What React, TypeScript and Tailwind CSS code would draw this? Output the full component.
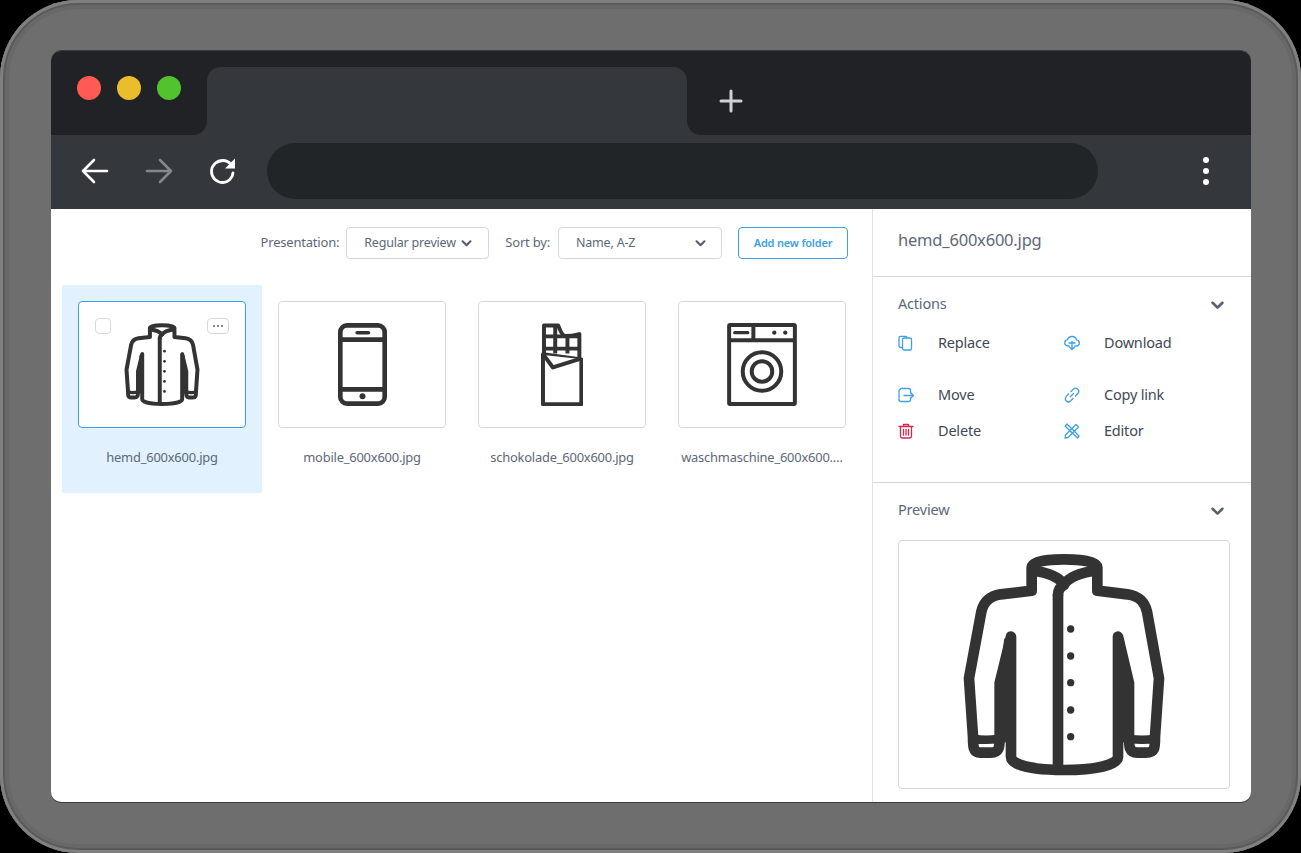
import React from "react";

const font = { fontFamily: '"Noto Sans", sans-serif' };

function Jacket({ className }: { className: string }) {
  return (
    <svg viewBox="0 0 690 747" className={className} fill="none" stroke="#333" strokeWidth="32" strokeLinejoin="round" strokeLinecap="round">
      <path d="M248 152V82C248 66 290 58 345 58C400 58 445 66 445 82V152L535 163C575 169 588 190 594 215L630 415L618 590C618 625 618 638 590 638H565C540 638 540 620 540 590V430L507 290V650C507 675 440 690 345 690C250 690 186 675 186 650V290L152 430V590C152 625 150 638 125 638H95C72 638 72 620 72 590L60 415L97 215C104 185 120 169 155 163L248 152Z" />
      <path d="M256 92C300 98 330 113 345 132C360 113 395 98 438 92" />
      <path d="M327 165V685" />
      <path d="M345 135C335 140 327 150 327 165" />
      <path d="M160 428L172 300V600H160Z" fill="#333" strokeWidth="14" />
      <path d="M530 428L518 300V600H530Z" fill="#333" strokeWidth="14" />
      <path d="M75 596C95 600 125 600 150 596M540 596C565 600 595 600 618 596" strokeWidth="26" />
      <g fill="#333" stroke="none">
        <circle cx="365" cy="267" r="11" />
        <circle cx="365" cy="348" r="11" />
        <circle cx="365" cy="428" r="11" />
        <circle cx="365" cy="510" r="11" />
        <circle cx="365" cy="590" r="11" />
      </g>
    </svg>
  );
}

function Phone() {
  return (
    <svg viewBox="0 0 148 250" className="h-[83px] w-[49px]" fill="none" stroke="#333" strokeWidth="14" strokeLinecap="round">
      <rect x="7" y="7" width="134" height="236" rx="20" />
      <path d="M7 50H141M7 200H141" />
      <path d="M58 29H92" strokeWidth="11" />
      <circle cx="74" cy="221" r="9" fill="#333" stroke="none" />
    </svg>
  );
}

function Chocolate() {
  return (
    <svg viewBox="0 0 127 250" className="h-[83px] w-[42px]" fill="none" stroke="#333" strokeWidth="12" strokeLinejoin="round">
      <path d="M9 92V7H52C58 20 62 38 74 39C88 39 100 37 116 33V105" />
      <path d="M9 40H116M9 77H116M43 7V92M80 40V92" />
      <path d="M6 94L122 110V245H6Z" fill="#fff" />
      <path d="M8 96L36 134L118 108" fill="#fff" />
    </svg>
  );
}

function Washer() {
  return (
    <svg viewBox="0 0 210 250" className="h-[83px] w-[70px]" fill="none" stroke="#333" strokeWidth="12" strokeLinejoin="round">
      <rect x="6" y="6" width="198" height="238" rx="3" />
      <path d="M5 52H205M79 6V52" />
      <path d="M23 29H62" strokeWidth="10" strokeLinecap="round" />
      <circle cx="142" cy="29" r="6.5" fill="#333" stroke="none" />
      <circle cx="175" cy="29" r="6.5" fill="#333" stroke="none" />
      <circle cx="105" cy="146" r="58" strokeWidth="12" />
      <circle cx="105" cy="146" r="31" strokeWidth="12" />
    </svg>
  );
}

function Chevron({ className }: { className: string }) {
  return (
    <svg viewBox="0 0 12 8" className={className} fill="none" stroke="#56606f" strokeWidth="2.4" strokeLinecap="round" strokeLinejoin="round">
      <path d="M1.5 1.5L6 6L10.5 1.5" />
    </svg>
  );
}

function ActionIcon({ d, red }: { d: React.ReactNode; red?: boolean }) {
  return (
    <svg viewBox="0 0 16 16" className="h-4 w-4" fill="none" stroke={red ? "#d4284f" : "#3d9fe6"} strokeWidth="1.3" strokeLinecap="round" strokeLinejoin="round">
      {d}
    </svg>
  );
}

const actions: { label: string; icon: React.ReactNode; red?: boolean }[] = [
  {
    label: "Replace",
    icon: (
      <>
        <path d="M4 12.500H2.600C1.700 12.500 1 11.800 1 11V3C1 2 1.700 1.400 2.600 1.400H7.500C8.400 1.400 9 2 9 3" />
        <rect x="4.500" y="3" width="9" height="12" rx="1.600" />
      </>
    ),
  },
  {
    label: "Download",
    icon: (
      <>
        <path d="M5 11H4C2 11 .7 9.500 .7 7.800C.7 6.200 1.900 4.900 3.400 4.700C4 2.900 5.800 1.500 8 1.500C10.300 1.500 12.100 3.100 12.500 4.900C14.100 5.100 15.300 6.300 15.300 7.900C15.300 9.600 14 11 12 11H11" />
        <path d="M8 6.500V14.500M5.500 12L8 14.500L10.500 12M5 8H11" />
      </>
    ),
  },
  {
    label: "Move",
    icon: (
      <>
        <path d="M12.500 6V3.500C12.500 2.300 11.700 1.500 10.500 1.500H3L1 3.500V12.500C1 13.700 1.800 14.500 3 14.500H10.500C11.700 14.500 12.500 13.700 12.500 12.500V11" />
        <path d="M6 8.500H15.500M13 6L15.500 8.500L13 11" />
      </>
    ),
  },
  {
    label: "Copy link",
    icon: (
      <>
        <path d="M6.500 9.500L9.500 6.500" />
        <path d="M7 4.500L9.500 2C10.800 .9 12.600 .9 13.800 2.200C15 3.400 15 5.200 13.800 6.500L11.500 9" />
        <path d="M9 11.500L6.500 14C5.200 15.200 3.400 15.200 2.200 14C1 12.800 1 10.900 2.200 9.700L4.500 7" />
      </>
    ),
  },
  {
    label: "Delete",
    red: true,
    icon: (
      <>
        <path d="M1 3.500H15M5.500 3.500V1.500H10.500V3.500" />
        <path d="M2.500 3.500V13.200C2.500 14.300 3.200 15 4.300 15H11.700C12.800 15 13.500 14.300 13.500 13.200V3.500" />
        <path d="M5.500 6.500V12M8 6.500V12M10.500 6.500V12" />
      </>
    ),
  },
  {
    label: "Editor",
    icon: (
      <>
        <path d="M3 1L15 13L13.500 15L1.200 3.200Z" />
        <path d="M12 1.500L14.500 4L4 14.500L1 15L1.500 12Z" />
      </>
    ),
  },
];

const files = [
  { name: "hemd_600x600.jpg", image: <Jacket className="h-[93px] w-[86px]" />, selected: true },
  { name: "mobile_600x600.jpg", image: <Phone /> },
  { name: "schokolade_600x600.jpg", image: <Chocolate /> },
  { name: "waschmaschine_600x600.…", image: <Washer /> },
];

function Tile({ name, image, selected }: { name: string; image: React.ReactNode; selected?: boolean }) {
  return (
    <div className={`h-[208px] w-[200px] rounded-[2px] p-4 ${selected ? "bg-[#e1f1fd]" : ""}`}>
      <div className={`relative flex h-[127px] w-[168px] items-center justify-center rounded-[4px] border bg-white ${selected ? "border-[#3d9fe6]" : "border-[#d5d9dd]"}`}>
        {image}
        {selected && (
          <>
            <div className="absolute left-4 top-4 h-4 w-4 rounded-[4px] border border-[#d5d9dd]" />
            <div className="absolute right-4 top-4 flex h-4 w-[22px] items-center justify-center gap-[2px] rounded-[4px] border border-[#d5d9dd]">
              <span className="h-[2px] w-[2px] rounded-full bg-[#56606f]" />
              <span className="h-[2px] w-[2px] rounded-full bg-[#56606f]" />
              <span className="h-[2px] w-[2px] rounded-full bg-[#56606f]" />
            </div>
          </>
        )}
      </div>
      <div className="mt-[19px] whitespace-nowrap text-center text-[12.900px] leading-[20px] tracking-[-0.2px] text-[#5d6878]">{name}</div>
    </div>
  );
}

export default function App() {
  return (
    <div style={font} className="h-[853px] w-[1301px] overflow-hidden bg-black">
      <div className="h-[853px] w-[1301px] rounded-[78px] bg-[#6e6e6e] p-[51px] shadow-[inset_0_0_0_3px_#808080,inset_0_0_0_5px_#5a5a5a,inset_0_0_0_9px_#686868]">
        <div className="flex h-[751px] w-[1200px] flex-col overflow-hidden rounded-[10px] bg-white shadow-[0_-1px_0_0_#3a3a3a,0_1px_0_0_#3a3a3a]">
          <div className="flex h-[84px] bg-[#34383c]">
            <div className="flex w-[156px] items-center gap-4 rounded-br-[14px] bg-[#202225] pb-[10px] pl-[26px]">
              <span className="h-6 w-6 rounded-full bg-[#ff5b52]" />
              <span className="h-6 w-6 rounded-full bg-[#e9bd2b]" />
              <span className="h-6 w-6 rounded-full bg-[#52c22f]" />
            </div>
            <div className="w-[480px] bg-[#202225] pt-4">
              <div className="h-full rounded-t-[14px] bg-[#34383c]" />
            </div>
            <div className="flex flex-1 items-center rounded-bl-[14px] bg-[#202225] pl-[32px] pt-[16px]">
              <svg viewBox="0 0 24 24" className="h-6 w-6" stroke="#cfd1d3" strokeWidth="3" strokeLinecap="round">
                <path d="M12 2V22M2 12H22" />
              </svg>
            </div>
          </div>
          <div className="flex h-[74px] items-center bg-[#34383c] pb-[2px] pl-[30px] pr-[42px]">
            <svg viewBox="0 0 28 26" className="h-[26px] w-[28px]" fill="none" stroke="#fff" strokeWidth="2.600" strokeLinecap="round" strokeLinejoin="round">
              <path d="M26 13H2M13 2L2 13L13 24" />
            </svg>
            <svg viewBox="0 0 28 26" className="ml-[36px] h-[26px] w-[28px]" fill="none" stroke="#85888a" strokeWidth="2.600" strokeLinecap="round" strokeLinejoin="round">
              <path d="M2 13H26M15 2L26 13L15 24" />
            </svg>
            <svg viewBox="0 0 28 28" className="ml-[36px] h-[28px] w-[28px]" fill="none" stroke="#fff" strokeWidth="2.800" strokeLinecap="round">
              <path d="M24 16C23.500 21.500 19 25.500 14 25.500C8 25.500 2.500 21 2.500 14.500C2.500 8 8 3.500 14 3.500C17.500 3.500 20 5 22 7.500" />
              <path d="M26 1.500V11.500H16Z" fill="#fff" stroke="none" />
            </svg>
            <div className="ml-[30px] h-[56px] w-[831px] rounded-[28px] bg-[#222528]" />
            <div className="ml-auto flex flex-col gap-[5px]">
              <span className="h-[6px] w-[6px] rounded-full bg-white" />
              <span className="h-[6px] w-[6px] rounded-full bg-white" />
              <span className="h-[6px] w-[6px] rounded-full bg-white" />
            </div>
          </div>
          <div className="flex min-h-0 flex-1">
            <div className="w-[821px] px-[11px] pt-[18px]">
              <div className="flex h-8 items-center justify-end pr-[13px] text-[12.500px] tracking-[-0.2px] text-[#5d6878]">
                <span className="text-[13px]">Presentation:</span>
                <div className="ml-[7px] flex h-8 w-[143px] items-center rounded-[4px] border border-[#d5d9dd] pl-[17px]">
                  <span>Regular preview</span>
                  <Chevron className="ml-[5px] h-[7px] w-[11px]" />
                </div>
                <span className="ml-4 text-[13px]">Sort by:</span>
                <div className="ml-2 flex h-8 w-[164px] items-center justify-between rounded-[4px] border border-[#d5d9dd] pl-[17px] pr-[15px]">
                  <span>Name, A-Z</span>
                  <Chevron className="h-[7px] w-[11px]" />
                </div>
                <button className="ml-4 h-8 w-[110px] rounded-[4px] border border-[#3d9fe6] text-[11px] font-semibold tracking-[-0.2px] text-[#3d9fe6]">Add new folder</button>
              </div>
              <div className="mt-[26px] flex">
                {files.map((f) => (
                  <Tile key={f.name} {...f} />
                ))}
              </div>
            </div>
            <div className="w-[379px] border-l border-[#dfe2e5]">
              <div className="flex h-[68px] items-center border-b border-[#d5d9dd] pb-1 pl-[25px] text-[16.500px] tracking-[-0.2px] text-[#5d6878]">hemd_600x600.jpg</div>
              <div className="h-[206px] border-b border-[#d5d9dd] px-[25px] pt-[17px]">
                <div className="flex h-5 items-center justify-between pr-[2px] text-[14.500px] tracking-[-0.2px] text-[#5d6878]">
                  <span>Actions</span>
                  <Chevron className="mt-[2px] h-[9px] w-[13px]" />
                </div>
                <div className="mt-[19px] grid grid-cols-[166px_166px] grid-rows-[52px_36px_20px] items-start">
                  {actions.map((a) => (
                    <div key={a.label} className="flex h-5 items-center text-[14.500px] tracking-[-0.2px] text-[#3f4855]">
                      <div className="w-10">
                        <ActionIcon d={a.icon} red={a.red} />
                      </div>
                      <span>{a.label}</span>
                    </div>
                  ))}
                </div>
              </div>
              <div className="px-[25px] pt-[17px]">
                <div className="flex h-5 items-center justify-between pr-[2px] text-[14.500px] tracking-[-0.2px] text-[#5d6878]">
                  <span>Preview</span>
                  <Chevron className="mt-[2px] h-[9px] w-[13px]" />
                </div>
                <div className="mt-5 flex h-[249px] w-[332px] items-center justify-center rounded-[4px] border border-[#d5d9dd]">
                  <Jacket className="h-[249px] w-[230px]" />
                </div>
              </div>
            </div>
          </div>
        </div>
      </div>
    </div>
  );
}
